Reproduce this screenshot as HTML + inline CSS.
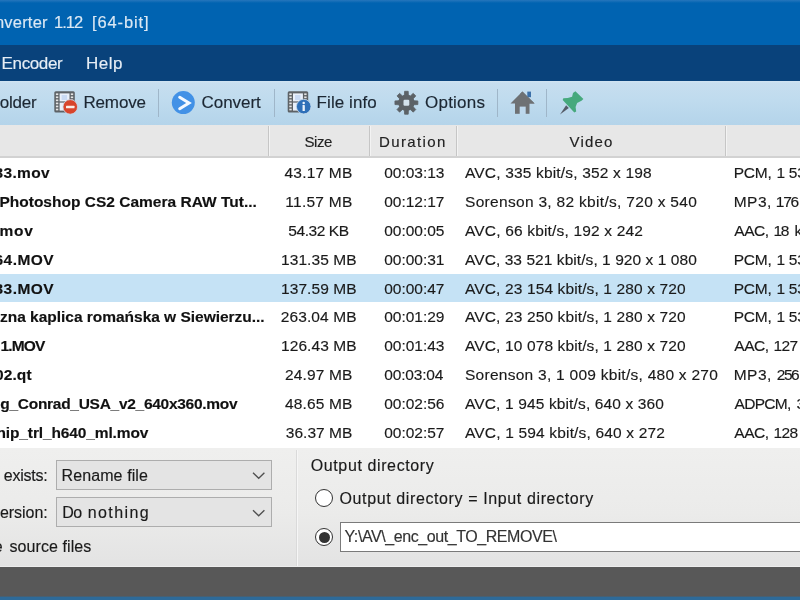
<!DOCTYPE html>
<html><head><meta charset="utf-8"><title>Converter</title>
<style>
html,body{margin:0;padding:0;}
body{width:800px;height:600px;overflow:hidden;position:relative;background:#fff;font-family:"Liberation Sans",sans-serif;}
.a{position:absolute;}
.t{position:absolute;white-space:pre;line-height:20px;-webkit-text-stroke:0.15px;font-family:"Liberation Sans",sans-serif;}
#title{left:0;top:0;width:800px;height:45px;background:#0063b1;}
#titletop{left:0;top:-20px;width:800px;height:23px;background:linear-gradient(#2676bc 20px,#0063b1);}
#menu{left:0;top:45px;width:800px;height:36px;background:#09427b;}
#tool{left:0;top:81px;width:800px;height:44px;background:linear-gradient(#d2e4f2 0,#c7deef 2px,#bfdbee 45%,#b4d4ea);}
#head{left:0;top:125px;width:800px;height:31px;background:#e7e7e7;border-bottom:2px solid #d2d2d2;}
.hs{top:126px;width:1px;height:30px;background:#c6c6c6;border-right:1px solid #f3f3f3;}
#list{left:0;top:158px;width:800px;height:290px;background:#fff;}
#sel{left:0;top:274px;width:800px;height:28px;background:#c5e2f5;}
#panel{left:0;top:447.5px;width:800px;height:119px;background:linear-gradient(#efefee,#ebebea 55%,#e3e3e3);}
#dark{left:0;top:566.5px;width:800px;height:31px;background:linear-gradient(#585858 28.5px,#2d6a99 31px);}
#blue{left:0;top:597px;width:800px;height:23px;background:#2d6a99;}
.sep{top:89px;width:1px;height:28px;background:#9fb6c9;}
.dd{left:56px;width:214px;height:27.5px;background:#e4e4e4;border:1px solid #adadad;}
.radio{width:16px;height:16px;border:1.4px solid #333;border-radius:50%;background:#fff;}
#tb{left:340px;top:522px;width:470px;height:28px;background:#fff;border:1px solid #7a7a7a;}
#wrap{position:absolute;left:-20px;top:-20px;width:840px;height:640px;filter:blur(0.5px);}
#in{position:absolute;left:20px;top:20px;width:800px;height:600px;}
.band{left:-20px !important;width:840px !important;}
</style></head><body><div id="wrap"><div id="in">
<div class="a band" id="title"></div><div class="a band" id="titletop"></div>
<div class="a band" id="menu"></div>
<div class="a band" id="tool"></div>
<div class="a sep" style="left:157.5px"></div><div class="a sep" style="left:274px"></div><div class="a sep" style="left:497px"></div><div class="a sep" style="left:546px"></div>
<div class="a band" id="head"></div>
<div class="a hs" style="left:268px"></div><div class="a hs" style="left:369px"></div><div class="a hs" style="left:456px"></div><div class="a hs" style="left:725px"></div>
<div class="a band" id="list"></div><div class="a band" id="sel"></div>
<div class="a band" id="panel"></div>
<div class="a" style="left:296px;top:450px;width:1px;height:116px;background:#dadada;border-right:1px solid #f6f6f6"></div><div class="a band" style="top:565.5px;height:1px;background:#ededed"></div>
<div class="a dd" style="top:460px"></div><div class="a dd" style="top:497px;height:28px"></div>
<div class="a radio" style="left:314.8px;top:488.8px"></div>
<div class="a radio" style="left:314.8px;top:527.6px"></div>
<div class="a" style="left:318.75px;top:531.5px;width:11px;height:11px;border-radius:50%;background:#333"></div>
<div class="a" id="tb"></div>
<div class="a band" id="dark"></div><div class="a band" id="blue"></div>
<svg class="a" style="left:0;top:0" width="800" height="600" viewBox="0 0 800 600">
<path d="M253 472.8 L258.7 478.3 L264.4 472.8" fill="none" stroke="#505050" stroke-width="1.35"/>
<path d="M253 510.3 L258.7 515.8 L264.4 510.3" fill="none" stroke="#505050" stroke-width="1.35"/>
<rect x="54.3" y="91.2" width="20.5" height="21.2" rx="1.5" fill="#5d6266"/>
<rect x="59.599999999999994" y="93.4" width="9.9" height="8" fill="#e9f0fa"/>
<rect x="59.599999999999994" y="102.60000000000001" width="9.9" height="8" fill="#e9f0fa"/>
<rect x="61.599999999999994" y="95.0" width="5.5" height="5" fill="#c9daf3"/>
<rect x="55.9" y="93.40" width="2.4" height="1.7" fill="#e6e6e6"/>
<rect x="70.8" y="93.40" width="2.4" height="1.7" fill="#e6e6e6"/>
<rect x="55.9" y="96.45" width="2.4" height="1.7" fill="#e6e6e6"/>
<rect x="70.8" y="96.45" width="2.4" height="1.7" fill="#e6e6e6"/>
<rect x="55.9" y="99.50" width="2.4" height="1.7" fill="#e6e6e6"/>
<rect x="70.8" y="99.50" width="2.4" height="1.7" fill="#e6e6e6"/>
<rect x="55.9" y="102.55" width="2.4" height="1.7" fill="#e6e6e6"/>
<rect x="70.8" y="102.55" width="2.4" height="1.7" fill="#e6e6e6"/>
<rect x="55.9" y="105.60" width="2.4" height="1.7" fill="#e6e6e6"/>
<rect x="70.8" y="105.60" width="2.4" height="1.7" fill="#e6e6e6"/>
<rect x="55.9" y="108.65" width="2.4" height="1.7" fill="#e6e6e6"/>
<rect x="70.8" y="108.65" width="2.4" height="1.7" fill="#e6e6e6"/>
<circle cx="70.25" cy="106.9" r="7.3" fill="#d8452c" stroke="#c8dcec" stroke-width="0.8"/>
<rect x="66" y="105.7" width="8.5" height="2.5" rx="0.5" fill="#fbeee9"/>
<circle cx="183.3" cy="102.6" r="11.5" fill="#4291e6"/>
<path d="M179.7 97.3 L189 102.9 L179.7 108.7" fill="none" stroke="#f4f9ff" stroke-width="3" stroke-linecap="round" stroke-linejoin="miter"/>
<rect x="287.7" y="91.2" width="20.5" height="21.2" rx="1.5" fill="#5d6266"/>
<rect x="293.0" y="93.4" width="9.9" height="8" fill="#e9f0fa"/>
<rect x="293.0" y="102.60000000000001" width="9.9" height="8" fill="#e9f0fa"/>
<rect x="295.0" y="95.0" width="5.5" height="5" fill="#c9daf3"/>
<rect x="289.3" y="93.40" width="2.4" height="1.7" fill="#e6e6e6"/>
<rect x="304.2" y="93.40" width="2.4" height="1.7" fill="#e6e6e6"/>
<rect x="289.3" y="96.45" width="2.4" height="1.7" fill="#e6e6e6"/>
<rect x="304.2" y="96.45" width="2.4" height="1.7" fill="#e6e6e6"/>
<rect x="289.3" y="99.50" width="2.4" height="1.7" fill="#e6e6e6"/>
<rect x="304.2" y="99.50" width="2.4" height="1.7" fill="#e6e6e6"/>
<rect x="289.3" y="102.55" width="2.4" height="1.7" fill="#e6e6e6"/>
<rect x="304.2" y="102.55" width="2.4" height="1.7" fill="#e6e6e6"/>
<rect x="289.3" y="105.60" width="2.4" height="1.7" fill="#e6e6e6"/>
<rect x="304.2" y="105.60" width="2.4" height="1.7" fill="#e6e6e6"/>
<rect x="289.3" y="108.65" width="2.4" height="1.7" fill="#e6e6e6"/>
<rect x="304.2" y="108.65" width="2.4" height="1.7" fill="#e6e6e6"/>
<circle cx="303.7" cy="106.6" r="7.3" fill="#2e6fb8" stroke="#c8dcec" stroke-width="0.8"/>
<circle cx="303.7" cy="102.9" r="1.25" fill="#e8f1fb"/>
<rect x="302.55" y="105.1" width="2.3" height="6" rx="0.4" fill="#e8f1fb"/>
<polygon points="404.39,95.42 404.59,91.29 408.21,91.29 408.41,95.42 410.17,96.15 413.22,93.37 415.78,95.93 413.00,98.98 413.73,100.74 417.86,100.94 417.86,104.56 413.73,104.76 413.00,106.52 415.78,109.57 413.22,112.13 410.17,109.35 408.41,110.08 408.21,114.21 404.59,114.21 404.39,110.08 402.63,109.35 399.58,112.13 397.02,109.57 399.80,106.52 399.07,104.76 394.94,104.56 394.94,100.94 399.07,100.74 399.80,98.98 397.02,95.93 399.58,93.37 402.63,96.15" fill="#5c6267" stroke="#5c6267" stroke-width="0.8" stroke-linejoin="round"/>
<circle cx="406.4" cy="102.75" r="8.0" fill="#5c6267"/>
<rect x="403.5" y="99.85" width="5.8" height="5.8" rx="1.2" fill="#d3e2ec"/>
<polygon points="522.4,91.6 534.6,103.6 510.5,103.6" fill="#6e7174"/>
<rect x="515" y="103" width="14.5" height="10.8" fill="#6e7174"/>
<rect x="519.7" y="106.6" width="6" height="7.4" fill="#bdd8ed"/>
<rect x="527.3" y="91.6" width="3.7" height="5.6" fill="#3c70a8"/>
<polygon points="522.4,91.6 534.6,103.6 528,103.6 520,94" fill="#6e7174"/>
<polygon points="566.1,105.3 568.8,108.0 560.0,114.4" fill="#555c68"/>
<polygon points="573.0,93.1 575.4,91.2 583.4,98.9 581.5,100.8 577.1,102.9 575.6,106.9 576.2,111.6 574.3,112.6 562.7,99.9 563.3,98.3 567.7,98.1 572.1,96.7" fill="#46a97d"/>
</svg>
<span class="t" style="left:-26.55px;top:12.28px;font-size:16.5px;color:#dbe8f4;letter-spacing:0.200px;">Converter</span>
<span class="t" style="left:54.00px;top:12.28px;font-size:16.5px;color:#dbe8f4;letter-spacing:-0.979px;">1.12</span>
<span class="t" style="left:92.00px;top:12.28px;font-size:16.5px;color:#dbe8f4;letter-spacing:0.877px;">[64-bit]</span>
<span class="t" style="left:1.60px;top:53.81px;font-size:17px;color:#e6edf5;letter-spacing:-0.376px;">Encoder</span>
<span class="t" style="left:86.00px;top:53.81px;font-size:17px;color:#e6edf5;letter-spacing:0.497px;">Help</span>
<span class="t" style="left:-10.52px;top:92.81px;font-size:17px;color:#1c2733;letter-spacing:-0.200px;">Folder</span>
<span class="t" style="left:83.40px;top:92.81px;font-size:17px;color:#1c2733;letter-spacing:-0.129px;">Remove</span>
<span class="t" style="left:201.60px;top:92.81px;font-size:17px;color:#1c2733;letter-spacing:-0.067px;">Convert</span>
<span class="t" style="left:316.60px;top:92.81px;font-size:17px;color:#1c2733;letter-spacing:0.066px;">File&nbsp;info</span>
<span class="t" style="left:425.00px;top:92.81px;font-size:17px;color:#1c2733;letter-spacing:0.236px;">Options</span>
<span class="t" style="left:304.50px;top:131.80px;font-size:15px;color:#222;letter-spacing:-0.446px;">Size</span>
<span class="t" style="left:379.00px;top:131.80px;font-size:15px;color:#222;letter-spacing:1.378px;">Duration</span>
<span class="t" style="left:569.50px;top:131.80px;font-size:15px;color:#222;letter-spacing:1.187px;">Video</span>
<span class="t" style="left:-5.50px;top:162.63px;font-size:15.5px;color:#111;letter-spacing:0.341px;font-weight:700;">33.mov</span>
<span class="t" style="left:284.50px;top:162.63px;font-size:15.5px;color:#1a1a1a;letter-spacing:0.213px;">43.17&nbsp;MB</span>
<span class="t" style="left:384.25px;top:162.63px;font-size:15.5px;color:#1a1a1a;letter-spacing:-0.031px;">00:03:13</span>
<span class="t" style="left:465.00px;top:162.63px;font-size:15.5px;color:#1a1a1a;letter-spacing:0.170px;">AVC,&nbsp;335&nbsp;kbit/s,&nbsp;352&nbsp;x&nbsp;198</span>
<span class="t" style="left:733.75px;top:162.63px;font-size:15.5px;color:#1a1a1a;letter-spacing:-0.231px;">PCM,</span>
<span class="t" style="left:776.50px;top:162.63px;font-size:15.5px;color:#1a1a1a;letter-spacing:0.000px;">1</span>
<span class="t" style="left:788.75px;top:162.63px;font-size:15.5px;color:#1a1a1a;letter-spacing:0.000px;">536&nbsp;kbit/s</span>
<span class="t" style="left:-0.60px;top:191.60px;font-size:15.5px;color:#111;letter-spacing:0.010px;font-weight:700;">Photoshop&nbsp;CS2&nbsp;Camera&nbsp;RAW&nbsp;Tut...</span>
<span class="t" style="left:285.25px;top:191.60px;font-size:15.5px;color:#1a1a1a;letter-spacing:0.271px;">11.57&nbsp;MB</span>
<span class="t" style="left:384.25px;top:191.60px;font-size:15.5px;color:#1a1a1a;letter-spacing:-0.031px;">00:12:17</span>
<span class="t" style="left:465.00px;top:191.60px;font-size:15.5px;color:#1a1a1a;letter-spacing:0.307px;">Sorenson&nbsp;3,&nbsp;82&nbsp;kbit/s,&nbsp;720&nbsp;x&nbsp;540</span>
<span class="t" style="left:733.75px;top:191.60px;font-size:15.5px;color:#1a1a1a;letter-spacing:0.460px;">MP3,</span>
<span class="t" style="left:775.75px;top:191.60px;font-size:15.5px;color:#1a1a1a;letter-spacing:-1.245px;">176&nbsp;kbit/s</span>
<span class="t" style="left:-0.50px;top:220.57px;font-size:15.5px;color:#111;letter-spacing:0.750px;font-weight:700;">mov</span>
<span class="t" style="left:288.25px;top:220.57px;font-size:15.5px;color:#1a1a1a;letter-spacing:-0.419px;">54.32&nbsp;KB</span>
<span class="t" style="left:384.25px;top:220.57px;font-size:15.5px;color:#1a1a1a;letter-spacing:-0.031px;">00:00:05</span>
<span class="t" style="left:465.00px;top:220.57px;font-size:15.5px;color:#1a1a1a;letter-spacing:0.174px;">AVC,&nbsp;66&nbsp;kbit/s,&nbsp;192&nbsp;x&nbsp;242</span>
<span class="t" style="left:734.30px;top:220.57px;font-size:15.5px;color:#1a1a1a;letter-spacing:-0.473px;">AAC,</span>
<span class="t" style="left:773.50px;top:220.57px;font-size:15.5px;color:#1a1a1a;letter-spacing:-1.370px;">18</span>
<span class="t" style="left:794.50px;top:220.57px;font-size:15.5px;color:#1a1a1a;letter-spacing:0.000px;">kbit/s</span>
<span class="t" style="left:-5.50px;top:249.54px;font-size:15.5px;color:#111;letter-spacing:0.447px;font-weight:700;">64.MOV</span>
<span class="t" style="left:281.00px;top:249.54px;font-size:15.5px;color:#1a1a1a;letter-spacing:0.078px;">131.35&nbsp;MB</span>
<span class="t" style="left:384.25px;top:249.54px;font-size:15.5px;color:#1a1a1a;letter-spacing:-0.031px;">00:00:31</span>
<span class="t" style="left:465.00px;top:249.54px;font-size:15.5px;color:#1a1a1a;letter-spacing:0.064px;">AVC,&nbsp;33&nbsp;521&nbsp;kbit/s,&nbsp;1&nbsp;920&nbsp;x&nbsp;1&nbsp;080</span>
<span class="t" style="left:733.75px;top:249.54px;font-size:15.5px;color:#1a1a1a;letter-spacing:-0.231px;">PCM,</span>
<span class="t" style="left:776.50px;top:249.54px;font-size:15.5px;color:#1a1a1a;letter-spacing:0.000px;">1</span>
<span class="t" style="left:788.75px;top:249.54px;font-size:15.5px;color:#1a1a1a;letter-spacing:0.000px;">536&nbsp;kbit/s</span>
<span class="t" style="left:-5.50px;top:278.51px;font-size:15.5px;color:#111;letter-spacing:0.447px;font-weight:700;">33.MOV</span>
<span class="t" style="left:281.00px;top:278.51px;font-size:15.5px;color:#1a1a1a;letter-spacing:0.078px;">137.59&nbsp;MB</span>
<span class="t" style="left:384.25px;top:278.51px;font-size:15.5px;color:#1a1a1a;letter-spacing:-0.031px;">00:00:47</span>
<span class="t" style="left:465.00px;top:278.51px;font-size:15.5px;color:#1a1a1a;letter-spacing:0.126px;">AVC,&nbsp;23&nbsp;154&nbsp;kbit/s,&nbsp;1&nbsp;280&nbsp;x&nbsp;720</span>
<span class="t" style="left:733.75px;top:278.51px;font-size:15.5px;color:#1a1a1a;letter-spacing:-0.231px;">PCM,</span>
<span class="t" style="left:776.50px;top:278.51px;font-size:15.5px;color:#1a1a1a;letter-spacing:0.000px;">1</span>
<span class="t" style="left:788.75px;top:278.51px;font-size:15.5px;color:#1a1a1a;letter-spacing:0.000px;">536&nbsp;kbit/s</span>
<span class="t" style="left:0.00px;top:307.48px;font-size:15.5px;color:#111;letter-spacing:-0.021px;font-weight:700;">zna&nbsp;kaplica&nbsp;romańska&nbsp;w&nbsp;Siewierzu...</span>
<span class="t" style="left:280.75px;top:307.48px;font-size:15.5px;color:#1a1a1a;letter-spacing:0.109px;">263.04&nbsp;MB</span>
<span class="t" style="left:384.25px;top:307.48px;font-size:15.5px;color:#1a1a1a;letter-spacing:-0.031px;">00:01:29</span>
<span class="t" style="left:465.00px;top:307.48px;font-size:15.5px;color:#1a1a1a;letter-spacing:0.126px;">AVC,&nbsp;23&nbsp;250&nbsp;kbit/s,&nbsp;1&nbsp;280&nbsp;x&nbsp;720</span>
<span class="t" style="left:733.75px;top:307.48px;font-size:15.5px;color:#1a1a1a;letter-spacing:-0.231px;">PCM,</span>
<span class="t" style="left:776.50px;top:307.48px;font-size:15.5px;color:#1a1a1a;letter-spacing:0.000px;">1</span>
<span class="t" style="left:788.75px;top:307.48px;font-size:15.5px;color:#1a1a1a;letter-spacing:0.000px;">536&nbsp;kbit/s</span>
<span class="t" style="left:0.50px;top:336.45px;font-size:15.5px;color:#111;letter-spacing:-0.849px;font-weight:700;">1.MOV</span>
<span class="t" style="left:281.00px;top:336.45px;font-size:15.5px;color:#1a1a1a;letter-spacing:0.078px;">126.43&nbsp;MB</span>
<span class="t" style="left:384.25px;top:336.45px;font-size:15.5px;color:#1a1a1a;letter-spacing:-0.031px;">00:01:43</span>
<span class="t" style="left:465.00px;top:336.45px;font-size:15.5px;color:#1a1a1a;letter-spacing:0.126px;">AVC,&nbsp;10&nbsp;078&nbsp;kbit/s,&nbsp;1&nbsp;280&nbsp;x&nbsp;720</span>
<span class="t" style="left:734.30px;top:336.45px;font-size:15.5px;color:#1a1a1a;letter-spacing:-0.473px;">AAC,</span>
<span class="t" style="left:773.50px;top:336.45px;font-size:15.5px;color:#1a1a1a;letter-spacing:-0.620px;">127&nbsp;kbit/s</span>
<span class="t" style="left:-5.00px;top:365.42px;font-size:15.5px;color:#111;letter-spacing:0.096px;font-weight:700;">02.qt</span>
<span class="t" style="left:285.00px;top:365.42px;font-size:15.5px;color:#1a1a1a;letter-spacing:0.142px;">24.97&nbsp;MB</span>
<span class="t" style="left:384.25px;top:365.42px;font-size:15.5px;color:#1a1a1a;letter-spacing:-0.174px;">00:03:04</span>
<span class="t" style="left:465.00px;top:365.42px;font-size:15.5px;color:#1a1a1a;letter-spacing:0.264px;">Sorenson&nbsp;3,&nbsp;1&nbsp;009&nbsp;kbit/s,&nbsp;480&nbsp;x&nbsp;270</span>
<span class="t" style="left:733.75px;top:365.42px;font-size:15.5px;color:#1a1a1a;letter-spacing:0.460px;">MP3,</span>
<span class="t" style="left:776.75px;top:365.42px;font-size:15.5px;color:#1a1a1a;letter-spacing:-1.495px;">256&nbsp;kbit/s</span>
<span class="t" style="left:0.30px;top:394.39px;font-size:15.5px;color:#111;letter-spacing:-0.283px;font-weight:700;">g_Conrad_USA_v2_640x360.mov</span>
<span class="t" style="left:285.00px;top:394.39px;font-size:15.5px;color:#1a1a1a;letter-spacing:0.142px;">48.65&nbsp;MB</span>
<span class="t" style="left:384.25px;top:394.39px;font-size:15.5px;color:#1a1a1a;letter-spacing:-0.031px;">00:02:56</span>
<span class="t" style="left:465.00px;top:394.39px;font-size:15.5px;color:#1a1a1a;letter-spacing:0.134px;">AVC,&nbsp;1&nbsp;945&nbsp;kbit/s,&nbsp;640&nbsp;x&nbsp;360</span>
<span class="t" style="left:734.50px;top:394.39px;font-size:15.5px;color:#1a1a1a;letter-spacing:-0.695px;">ADPCM,</span>
<span class="t" style="left:796.50px;top:394.39px;font-size:15.5px;color:#1a1a1a;letter-spacing:0.000px;">353&nbsp;kbit/s</span>
<span class="t" style="left:-3.50px;top:423.36px;font-size:15.5px;color:#111;letter-spacing:-0.129px;font-weight:700;">hip_trl_h640_ml.mov</span>
<span class="t" style="left:285.75px;top:423.36px;font-size:15.5px;color:#1a1a1a;letter-spacing:0.035px;">36.37&nbsp;MB</span>
<span class="t" style="left:384.25px;top:423.36px;font-size:15.5px;color:#1a1a1a;letter-spacing:-0.031px;">00:02:57</span>
<span class="t" style="left:465.00px;top:423.36px;font-size:15.5px;color:#1a1a1a;letter-spacing:0.171px;">AVC,&nbsp;1&nbsp;594&nbsp;kbit/s,&nbsp;640&nbsp;x&nbsp;272</span>
<span class="t" style="left:734.30px;top:423.36px;font-size:15.5px;color:#1a1a1a;letter-spacing:-0.473px;">AAC,</span>
<span class="t" style="left:773.50px;top:423.36px;font-size:15.5px;color:#1a1a1a;letter-spacing:-0.620px;">128&nbsp;kbit/s</span>
<span class="t" style="left:3.75px;top:465.91px;font-size:16px;color:#1a1a1a;letter-spacing:-0.233px;">exists:</span>
<span class="t" style="left:61.50px;top:465.91px;font-size:16px;color:#1a1a1a;letter-spacing:0.102px;">Rename&nbsp;file</span>
<span class="t" style="left:0.00px;top:503.16px;font-size:16px;color:#1a1a1a;letter-spacing:-0.055px;">ersion:</span>
<span class="t" style="left:62.20px;top:503.16px;font-size:16px;color:#1a1a1a;letter-spacing:-0.505px;">Do</span>
<span class="t" style="left:87.70px;top:503.16px;font-size:16px;color:#1a1a1a;letter-spacing:1.418px;">nothing</span>
<span class="t" style="left:9.50px;top:537.16px;font-size:16px;color:#1a1a1a;letter-spacing:0.075px;">source&nbsp;files</span>
<span class="t" style="left:-6.20px;top:537.16px;font-size:16px;color:#1a1a1a;letter-spacing:0.000px;">e</span>
<span class="t" style="left:310.75px;top:455.91px;font-size:16px;color:#1a1a1a;letter-spacing:0.611px;">Output&nbsp;directory</span>
<span class="t" style="left:339.50px;top:488.91px;font-size:16px;color:#1a1a1a;letter-spacing:0.615px;">Output&nbsp;directory&nbsp;=&nbsp;Input&nbsp;directory</span>
<span class="t" style="left:344.50px;top:527.16px;font-size:16px;color:#333;letter-spacing:-0.424px;">Y:\AV\_enc_out_TO_REMOVE\</span>
</div></div></body></html>
